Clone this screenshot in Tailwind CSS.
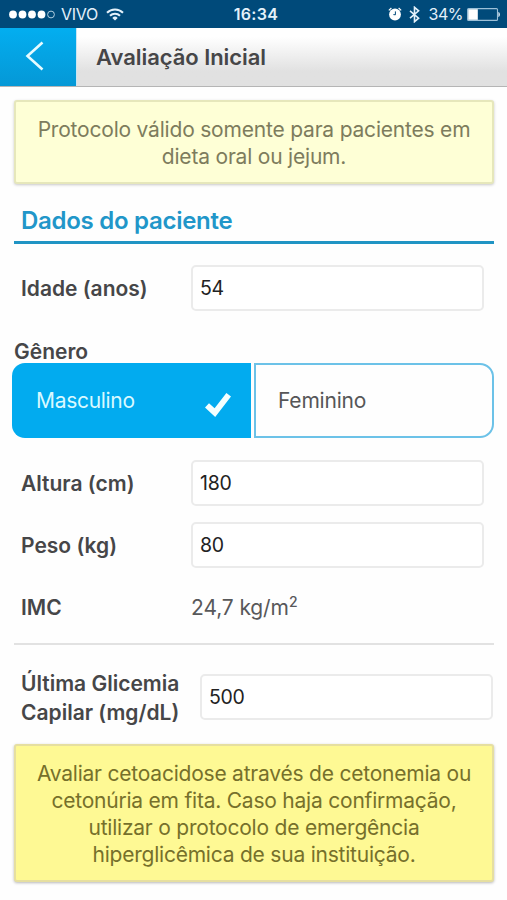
<!DOCTYPE html>
<html lang="pt-BR">
  <head>
    <meta charset="UTF-8" />
    <meta name="viewport" content="width=device-width, initial-scale=1.0" />
    <title>Avaliação Inicial</title>
    <script src="https://cdn.jsdelivr.net/npm/@tailwindcss/browser@4"></script>
  </head>
  <body
    class="bg-[#fefefe] text-[#464648] font-['Inter','Liberation_Sans',sans-serif] h-[900px] overflow-hidden"
  >
    <!-- Status bar -->
    <div
      class="h-7 bg-[#004a7a] text-[#e4f1fa] grid grid-cols-3 items-center pl-[9px] pr-[7px] text-[16px] leading-7"
    >
      <div class="flex items-center">
        <svg class="w-[46px] h-[9px]" viewBox="0 0 46 9" fill="#fff">
          <circle cx="4" cy="4.5" r="3.9" />
          <circle cx="13.5" cy="4.5" r="3.9" />
          <circle cx="23" cy="4.5" r="3.9" />
          <circle cx="32.5" cy="4.5" r="3.9" />
          <circle cx="42" cy="4.5" r="3.4" fill="none" stroke="#c4dcea" stroke-width="0.9" />
        </svg>
        <span class="ml-[6px] tracking-[-0.3px]">VIVO</span>
        <svg class="ml-2 w-[18px] h-[13px]" viewBox="0 0 18 13" fill="none" stroke="currentColor" stroke-width="2">
          <path d="M1 4.7a11.3 11.3 0 0 1 16 0" />
          <path d="M4 7.8a7 7 0 0 1 10 0" />
          <path d="M9 12.6 6.3 9.9a3.8 3.8 0 0 1 5.4 0z" fill="currentColor" stroke="none" />
        </svg>
      </div>
      <div class="pl-[3px] text-center font-semibold tracking-[0.3px]">16:34</div>
      <div class="flex items-center justify-end">
        <svg class="w-[14px] h-[14px]" viewBox="0 0 14 14" fill="none" stroke="#fff">
          <circle cx="7" cy="7.5" r="5.9" fill="#fff" stroke="none" />
          <path d="M.8 3.4 3.4 1M13.2 3.4 10.6 1" stroke-width="1.2" />
          <path d="M7.4 4.4v3.4L5.4 7.6" stroke="#004a7a" stroke-width="1" />
        </svg>
        <svg class="ml-[7px] w-[11px] h-[17px]" viewBox="0 0 11 17" fill="none" stroke="currentColor" stroke-width="1.6">
          <path d="M1 4.8l8.6 7.4-4.1 3.5V1.3l4.1 3.5L1 12.2" />
        </svg>
        <span class="ml-[9px] tracking-[-0.5px]">34%</span>
        <svg class="ml-[4px] w-[33px] h-[13px]" viewBox="0 0 33 13" fill="none">
          <rect x=".6" y=".6" width="29.9" height="11.8" rx="1" stroke="#9cc0d8" stroke-width="1.1" />
          <rect x="1.2" y="1.2" width="9.6" height="10.6" fill="#fff" />
          <path d="M31.4 4c2 .6 2 4.4 0 5z" fill="#e4f1fa" />
        </svg>
      </div>
    </div>

    <!-- Header -->
    <header
      class="h-[59px] flex items-center border-b border-[#b5b5b5] bg-linear-to-b from-white from-15% to-[#e1e1e1] to-75%"
    >
      <a
        href="#"
        class="w-[77px] h-full flex items-center border-r border-[#c9e6f4] bg-linear-to-b from-[#03aef0] to-[#0598d6]"
      >
        <svg class="ml-[25px] -mt-[2px] w-[19px] h-[30px]" viewBox="0 0 19 30" fill="none" stroke="#e6fbff" stroke-width="2.6">
          <path d="M17.5 1.5 2.5 15l15 13.5" />
        </svg>
      </a>
      <h1 class="ml-[19px] text-[22px] font-semibold tracking-[-0.05px] whitespace-nowrap">Avaliação Inicial</h1>
    </header>

    <main class="px-[14px] pt-[13px]">
      <div
        class="w-[480px] h-[84px] pt-[14px] border-2 border-[#e6e7bb] rounded-[3px] bg-[#feffd6] shadow-[0_1px_3px_rgba(0,0,0,0.22)] text-center text-[21px] leading-[27px] tracking-[-0.2px] text-[#7d7c5d] whitespace-nowrap"
      >
        Protocolo válido somente para pacientes em<br />dieta oral ou jejum.
      </div>

      <h2
        class="mt-[17px] w-[480px] h-[43px] pl-[7px] pt-[4px] border-b-3 border-[#2094c4] text-[24px] leading-[32px] font-semibold tracking-[-0.28px] text-[#2196c9]"
      >
        Dados do paciente
      </h2>

      <div class="mt-[21px] flex items-center">
        <label for="idade" class="w-[177px] pl-[7px] pt-[2px] text-[21px] font-semibold">Idade (anos)</label>
        <input id="idade" type="text" value="54" class="w-[293px] h-[46px] px-[7px] border-2 border-[#ebebeb] rounded-[5px] bg-white text-[19.5px] tracking-[-0.3px] text-[#222]" />
      </div>

      <!-- Gender -->
      <div class="mt-[26px] h-[26px] pt-px text-[21px] leading-[28px] font-semibold">Gênero</div>
      <div class="-ml-[2px] w-[482px] h-[75px] flex gap-[3px] text-[21px]">
        <button class="w-[239px] px-[24px] pt-px flex items-center justify-between rounded-l-[13px] bg-[#02abef] text-[#d9f9ff]">
          <span class="tracking-[-0.3px]">Masculino</span>
          <svg class="mt-[7px] -mr-[5px] w-[28px] h-[26px]" viewBox="0 0 28 26" fill="#f4ffff">
            <path d="M1 15.6 5 11.2 10.6 16.2 22.4 1 27 4.6 11.2 25z" />
          </svg>
        </button>
        <button class="flex-1 px-[22px] pt-px text-left border-2 border-[#6cc2e8] rounded-r-[14px] bg-[#fefefe] text-[#565658] tracking-[-0.2px]">Feminino</button>
      </div>

      <div class="mt-[22px] flex items-center">
        <label for="altura" class="w-[177px] pl-[7px] pt-[2px] text-[21px] font-semibold">Altura (cm)</label>
        <input id="altura" type="text" value="180" class="w-[293px] h-[46px] px-[7px] border-2 border-[#ebebeb] rounded-[5px] bg-white text-[19.5px] tracking-[-0.3px] text-[#222]" />
      </div>
      <div class="mt-[16px] flex items-center">
        <label for="peso" class="w-[177px] pl-[7px] pt-[2px] text-[21px] font-semibold">Peso (kg)</label>
        <input id="peso" type="text" value="80" class="w-[293px] h-[46px] px-[7px] border-2 border-[#ebebeb] rounded-[5px] bg-white text-[19.5px] tracking-[-0.3px] text-[#222]" />
      </div>
      <div class="mt-[16px] h-[47px] flex items-center text-[21px]">
        <span class="w-[177px] pl-[7px] font-semibold">IMC</span>
        <span class="text-[#58585a] tracking-[-0.1px]">24,7 kg/m<sup class="text-[14px] font-medium -top-[8px]">2</sup></span>
      </div>

      <hr class="mt-[12px] w-[480px] border-t-2 border-[#e2e2e2]" />

      <div class="mt-[23px] h-[58px] flex items-center">
        <label for="glicemia" class="w-[186px] pl-[7px] pt-[2px] text-[21px] leading-[29px] font-semibold whitespace-nowrap">Última Glicemia<br />Capilar (mg/dL)</label>
        <input id="glicemia" type="text" value="500" class="w-[293px] h-[46px] px-[7px] border-2 border-[#ebebeb] rounded-[5px] bg-white text-[19.5px] tracking-[-0.3px] text-[#222]" />
      </div>

      <div
        class="mt-[18px] w-[480px] h-[138px] pt-[14px] border-2 border-[#e6dfa0] rounded-[3px] bg-[#fef994] shadow-[0_1px_3px_rgba(0,0,0,0.28)] text-center text-[21px] leading-[27px] tracking-[-0.22px] text-[#76702b] whitespace-nowrap"
      >
        Avaliar cetoacidose através de cetonemia ou<br />cetonúria em fita. Caso haja confirmação,<br />utilizar o protocolo de emergência<br />hiperglicêmica de sua instituição.
      </div>
    </main>
  </body>
</html>
